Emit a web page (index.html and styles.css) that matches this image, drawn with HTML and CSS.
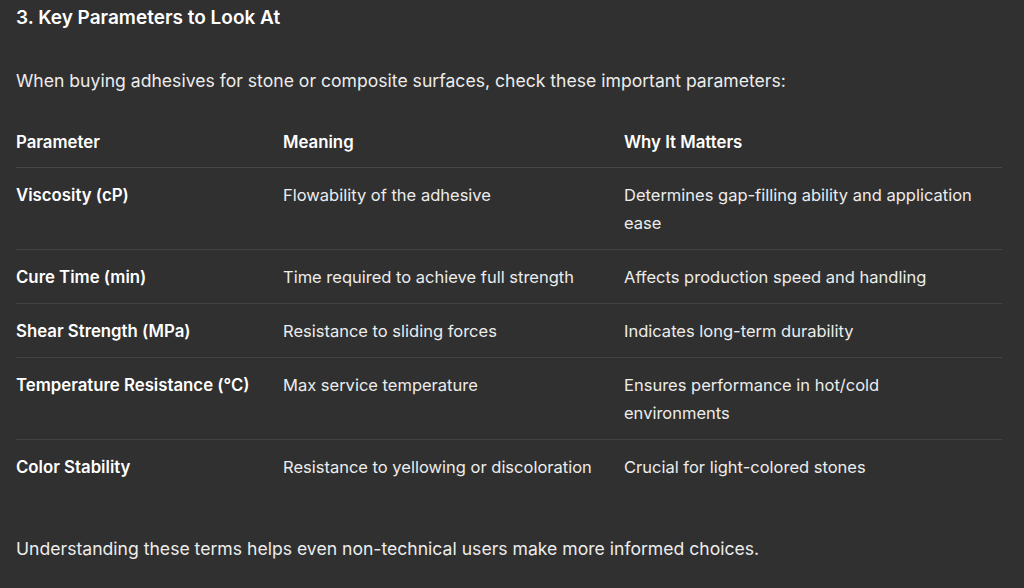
FILE: index.html
```html
<!DOCTYPE html>
<html lang="en">
<head>
<meta charset="utf-8">
<title>Key Parameters</title>
<link rel="stylesheet" href="styles.css">
</head>
<body>
<main class="content">
  <h3 class="heading">3. Key Parameters to Look At</h3>
  <p class="para intro">When buying adhesives for stone or composite surfaces, check these important parameters:</p>
  <table class="params">
    <colgroup>
      <col class="c1">
      <col class="c2">
      <col class="c3">
    </colgroup>
    <thead>
      <tr><th>Parameter</th><th>Meaning</th><th>Why It Matters</th></tr>
    </thead>
    <tbody>
      <tr><td class="name">Viscosity (cP)</td><td>Flowability of the adhesive</td><td>Determines gap-filling ability and application ease</td></tr>
      <tr><td class="name">Cure Time (min)</td><td>Time required to achieve full strength</td><td>Affects production speed and handling</td></tr>
      <tr><td class="name">Shear Strength (MPa)</td><td>Resistance to sliding forces</td><td>Indicates long-term durability</td></tr>
      <tr><td class="name">Temperature Resistance (°C)</td><td>Max service temperature</td><td>Ensures performance in hot/cold environments</td></tr>
      <tr><td class="name">Color Stability</td><td>Resistance to yellowing or discoloration</td><td>Crucial for light-colored stones</td></tr>
    </tbody>
  </table>
  <p class="para outro">Understanding these terms helps even non-technical users make more informed choices.</p>
</main>
</body>
</html>
```

FILE: styles.css
```css
html, body {
  margin: 0;
  padding: 0;
  background: #303030;
}
body {
  color: #ececec;
  font-family: Inter, "Noto Sans", "Liberation Sans", sans-serif;
  font-size: 16px;
  line-height: 28px;
}
.content {
  padding: 4px 22px 0 16px;
}
.heading {
  margin: 0;
  font-size: 19px;
  font-weight: 600;
  line-height: 28px;
  color: #ffffff;
}
.para {
  margin: 0;
  font-size: 17.6px;
}
.intro {
  margin-top: 35px;
}
.params {
  width: 986px;
  border-collapse: collapse;
  table-layout: fixed;
  margin-top: 33px;
  font-size: 16.5px;
}
.c1 { width: 267px; }
.c2 { width: 341px; }
.c3 { width: 378px; }
.params th {
  text-align: left;
  font-weight: 600;
  font-size: 16.8px;
  padding: 0 20px 11px 0;
  border-bottom: 1px solid #474747;
  color: #ffffff;
}
.params td {
  padding: 13px 20px 12px 0;
  vertical-align: top;
  border-bottom: 1px solid #434343;
}
.params tbody tr:last-child td {
  border-bottom: none;
}
.params td.name {
  font-weight: 600;
  font-size: 16.8px;
  color: #ffffff;
}
.outro {
  margin-top: 42px;
}
```
